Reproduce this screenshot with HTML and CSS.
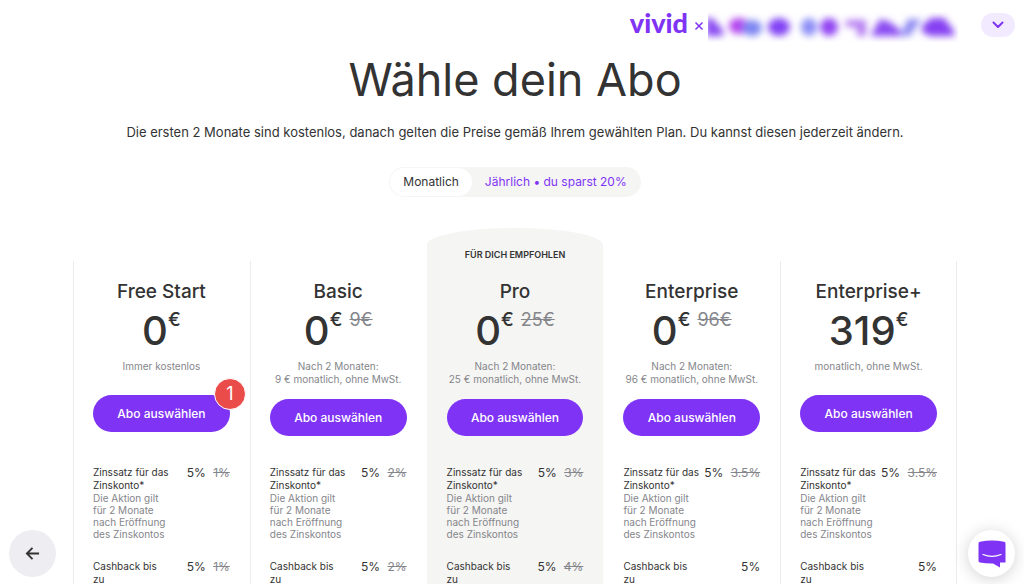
FILE: index.html
```html
<!DOCTYPE html>
<html lang="de">
<head>
    <meta charset="UTF-8">
    <meta name="viewport" content="width=device-width, initial-scale=1.0">
    <title>Wähle dein Abo</title>
    <link rel="stylesheet" href="styles.css">
</head>
<body>

    <header class="topbar">
        <div class="brand">
            <span class="logo">vivid</span>
            <svg class="times" viewBox="0 0 10 10" aria-hidden="true"><path d="M1.500 1.500l7 7M8.500 1.500l-7 7"/></svg>
            <svg class="partner" viewBox="0 0 250 30" aria-hidden="true">
                <defs>
                    <filter id="soft" x="-10%" y="-80%" width="120%" height="260%"><feGaussianBlur stdDeviation="3.8"/></filter>
                </defs>
                <g filter="url(#soft)">
                    <path fill="#8a4cf2" d="M-2 6h6l11 12v6H-2z"/>
                    <ellipse cx="31" cy="14" rx="10" ry="8" fill="#b443ee"/>
                    <ellipse cx="44" cy="16" rx="10" ry="8" fill="#7d86f2"/>
                    <ellipse cx="71" cy="15" rx="11" ry="9" fill="#8142f4"/>
                    <ellipse cx="101" cy="15" rx="8" ry="9" fill="#8c8df6"/>
                    <ellipse cx="121" cy="15" rx="9" ry="9" fill="#9145f2"/>
                    <path fill="#b47af0" d="M138 8h20v16h-9v-9h-11z"/>
                    <path fill="#8a4cf2" d="M163 23l9-16 10 3 11 9v5h-30z"/>
                    <path fill="#8f8bf3" d="M192 24l8-17h13l-11 17z"/>
                    <path fill="#8540f2" d="M214 14l9-8h13l10 13v5h-24l-8-4z"/>
                </g>
            </svg>
        </div>
        <button class="menu-button" aria-label="Menü">
            <svg viewBox="0 0 14 14" aria-hidden="true"><path d="M2.500 4.500L7 9l4.500-4.500"/></svg>
        </button>
    </header>

    <main class="page">
        <h1>Wähle dein Abo</h1>
        <p class="intro">Die ersten 2 Monate sind kostenlos, danach gelten die Preise gemäß Ihrem gewählten Plan. Du kannst diesen jederzeit ändern.</p>

        <div class="switch">
            <button class="switch-item active">Monatlich</button>
            <button class="switch-item">Jährlich • du sparst 20%</button>
        </div>

        <div class="plans">
            <section class="plan">
                <div class="plan-head">
                    <h2>Free Start</h2>
                    <div class="price">0<sup>€</sup></div>
                    <p class="note">Immer kostenlos</p>
                    <div class="choose-wrap">
                        <button class="choose">Abo auswählen</button>
                        <span class="badge">1</span>
                    </div>
                </div>
                <div class="feature">
                    <div class="feature-text">Zinssatz für das Zinskonto*<small>Die Aktion gilt für 2 Monate nach Eröffnung des Zinskontos</small></div>
                    <div class="rate">5% <del>1%</del></div>
                </div>
                <div class="feature">
                    <div class="feature-text">Cashback bis zu</div>
                    <div class="rate">5% <del>1%</del></div>
                </div>
            </section>

            <section class="plan">
                <div class="plan-head">
                    <h2>Basic</h2>
                    <div class="price">0<sup>€</sup><del>9€</del></div>
                    <p class="note">Nach 2 Monaten:<br>9 € monatlich, ohne MwSt.</p>
                    <div class="choose-wrap">
                        <button class="choose">Abo auswählen</button>
                    </div>
                </div>
                <div class="feature">
                    <div class="feature-text">Zinssatz für das Zinskonto*<small>Die Aktion gilt für 2 Monate nach Eröffnung des Zinskontos</small></div>
                    <div class="rate">5% <del>2%</del></div>
                </div>
                <div class="feature">
                    <div class="feature-text">Cashback bis zu</div>
                    <div class="rate">5% <del>2%</del></div>
                </div>
            </section>

            <section class="plan recommended">
                <p class="tag">Für dich empfohlen</p>
                <div class="plan-head">
                    <h2>Pro</h2>
                    <div class="price">0<sup>€</sup><del>25€</del></div>
                    <p class="note">Nach 2 Monaten:<br>25 € monatlich, ohne MwSt.</p>
                    <div class="choose-wrap">
                        <button class="choose">Abo auswählen</button>
                    </div>
                </div>
                <div class="feature">
                    <div class="feature-text">Zinssatz für das Zinskonto*<small>Die Aktion gilt für 2 Monate nach Eröffnung des Zinskontos</small></div>
                    <div class="rate">5% <del>3%</del></div>
                </div>
                <div class="feature">
                    <div class="feature-text">Cashback bis zu</div>
                    <div class="rate">5% <del>4%</del></div>
                </div>
            </section>

            <section class="plan plain">
                <div class="plan-head">
                    <h2>Enterprise</h2>
                    <div class="price">0<sup>€</sup><del>96€</del></div>
                    <p class="note">Nach 2 Monaten:<br>96 € monatlich, ohne MwSt.</p>
                    <div class="choose-wrap">
                        <button class="choose">Abo auswählen</button>
                    </div>
                </div>
                <div class="feature">
                    <div class="feature-text">Zinssatz für das Zinskonto*<small>Die Aktion gilt für 2 Monate nach Eröffnung des Zinskontos</small></div>
                    <div class="rate">5% <del>3.5%</del></div>
                </div>
                <div class="feature">
                    <div class="feature-text">Cashback bis zu</div>
                    <div class="rate">5%</div>
                </div>
            </section>

            <section class="plan last">
                <div class="plan-head">
                    <h2>Enterprise+</h2>
                    <div class="price">319<sup>€</sup></div>
                    <p class="note">monatlich, ohne MwSt.</p>
                    <div class="choose-wrap">
                        <button class="choose">Abo auswählen</button>
                    </div>
                </div>
                <div class="feature">
                    <div class="feature-text">Zinssatz für das Zinskonto*<small>Die Aktion gilt für 2 Monate nach Eröffnung des Zinskontos</small></div>
                    <div class="rate">5% <del>3.5%</del></div>
                </div>
                <div class="feature">
                    <div class="feature-text">Cashback bis zu</div>
                    <div class="rate">5%</div>
                </div>
            </section>
        </div>
    </main>

    <!-- Floating buttons -->
    <button class="float back" aria-label="Zurück">
        <svg viewBox="0 0 16 16" aria-hidden="true"><path d="M15 8H2M8 2L2 8l6 6"/></svg>
    </button>
    <button class="float chat" aria-label="Chat">
        <svg viewBox="0 0 28 28" aria-hidden="true">
            <path class="bubble" d="M2 1.800Q14-.6 26 1.800Q27.500 2 27.500 3.500v19h-5.500V27.500L15 23.500Q8 23.600 2 22.600Q.5 22.300.5 20.500V3.500Q.5 2 2 1.800z"/>
            <path class="smile" d="M5 14.500q9 3.600 18 0"/>
        </svg>
    </button>

</body>
</html>
```
FILE: styles.css
```css
* {
    box-sizing: border-box;
}
body {
    margin: 0;
    height: 100vh;
    overflow: hidden;
    font-family: Inter, "Liberation Sans", sans-serif;
    background-color: #fff;
    color: #333;
}
button {
    font-family: inherit;
    border: none;
    padding: 0;
    cursor: pointer;
}
h1, h2, p {
    margin: 0;
    text-align: center;
}
.topbar {
    display: flex;
    justify-content: flex-end;
    align-items: center;
    gap: 23px;
    height: 50px;
    padding-right: 9px;
}
.brand {
    display: flex;
    align-items: center;
}
.logo {
    font-family: Lato, sans-serif;
    font-weight: 900;
    font-size: 27px;
    line-height: 46px;
    padding-bottom: 4px;
    color: #7f33f5;
}
.times {
    width: 10px;
    height: 10px;
    margin: 2px 4px 0 6px;
    fill: none;
    stroke: #7f33f5;
    stroke-width: 1.5;
}
.partner {
    width: 250px;
    height: 30px;
    margin-top: 3px;
}
.menu-button {
    width: 34px;
    height: 24px;
    border-radius: 12px;
    background-color: #f2eafe;
}
.menu-button svg {
    display: block;
    width: 14px;
    height: 14px;
    margin: 0 auto;
    fill: none;
    stroke: #7f33f5;
    stroke-width: 2;
    stroke-linecap: round;
    stroke-linejoin: round;
}
.page {
    padding: 0 67px 0 73px;
}
h1 {
    font-weight: 400;
    font-size: 45px;
    line-height: 60px;
}
.intro {
    margin-top: 12px;
    font-size: 13px;
    line-height: 20px;
}
.switch {
    display: flex;
    width: fit-content;
    margin: 25px auto 31px;
    padding: 1px;
    border-radius: 15px;
    background-color: #f5f5f4;
}
.switch-item {
    height: 28px;
    padding: 0 13px 1px;
    border-radius: 14px;
    font-size: 12px;
    background-color: transparent;
    color: #7f33f5;
}
.switch-item.active {
    background-color: #fff;
    color: #333;
}
.plans {
    display: grid;
    grid-template-columns: repeat(5, 1fr);
}
.plan {
    margin-top: 33px;
    padding: 16px 20px 0 19px;
    border-left: 1px solid #ececec;
}
.plan.plain {
    border-left-color: transparent;
}
.plan.last {
    border-right: 1px solid #ececec;
    padding-right: 19px;
}
.plan.recommended {
    margin-top: 0;
    padding-top: 20px;
    border-left-color: #f5f5f3;
    border-radius: 50% 50% 0 0 / 17px 17px 0 0;
    background-color: #f5f5f3;
}
.tag {
    margin-bottom: 15px;
    font-weight: 600;
    font-size: 9px;
    line-height: 14px;
    text-transform: uppercase;
}
.plan-head {
    min-height: 189px;
}
h2 {
    font-weight: 500;
    font-size: 19px;
    line-height: 30px;
}
.price {
    display: flex;
    justify-content: center;
    align-items: flex-start;
    height: 46px;
    font-weight: 500;
    font-size: 40px;
    line-height: 48px;
}
.price sup, .price del {
    font-size: 19px;
    line-height: 26px;
}
.price del {
    margin-left: 7px;
    font-size: 18px;
    font-weight: 400;
    color: #85868b;
}
.note {
    min-height: 22px;
    margin: 7px -10px 13px;
    font-size: 10px;
    line-height: 13px;
    color: #85868b;
}
.choose-wrap {
    position: relative;
}
.choose {
    width: 100%;
    height: 37px;
    border-radius: 19px;
    font-weight: 500;
    font-size: 12px;
    background-color: #7f33f5;
    color: #fff;
}
.badge {
    position: absolute;
    top: -17px;
    right: -16px;
    width: 32px;
    height: 32px;
    border: 1px solid #fff;
    border-radius: 50%;
    background-color: #ea4c4a;
    color: #fff;
    font-size: 18px;
    line-height: 30px;
    text-align: center;
}
.feature {
    display: flex;
    justify-content: space-between;
    margin-bottom: 20px;
    font-size: 10px;
    line-height: 13px;
}
.feature-text {
    width: 78px;
}
.feature small {
    display: block;
    font-size: 10px;
    line-height: 12px;
    color: #85868b;
}
.rate {
    font-size: 12px;
    line-height: 13px;
    white-space: nowrap;
}
.rate del {
    margin-left: 4px;
    color: #85868b;
}
.float {
    position: fixed;
    display: flex;
    justify-content: center;
    align-items: center;
    width: 47px;
    height: 47px;
    border-radius: 50%;
}
.back {
    left: 9px;
    bottom: 7px;
    background-color: #ededf2;
}
.back svg {
    width: 15px;
    height: 15px;
    fill: none;
    stroke: #333;
    stroke-width: 2;
}
.chat {
    right: 9px;
    bottom: 7px;
    background-color: #fff;
    box-shadow: 0 2px 16px rgba(0, 0, 0, 0.18);
}
.chat svg {
    width: 28px;
    height: 28px;
}
.bubble {
    fill: #7f33f5;
}
.smile {
    fill: none;
    stroke: #fff;
    stroke-width: 1.3;
    stroke-linecap: round;
}
```
